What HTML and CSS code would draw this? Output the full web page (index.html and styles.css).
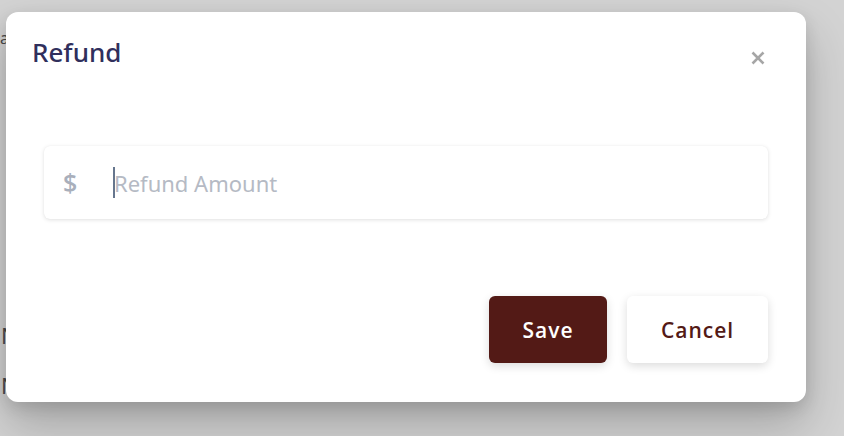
FILE: index.html
```html
<!DOCTYPE html>
<html lang="en">
<head>
<meta charset="utf-8">
<title>Refund</title>
<link rel="stylesheet" href="styles.css">
</head>
<body>
<div class="page">
  <p class="bg-line bg-top">a</p>
  <p class="bg-line bg-n1">N</p>
  <p class="bg-line bg-n2">N</p>
</div>
<div class="modal" role="dialog" aria-label="Refund">
  <div class="modal-header">
    <h2 class="modal-title">Refund</h2>
    <button class="close" aria-label="Close">
      <svg width="14" height="14" viewBox="0 0 14 14"><path d="M1.5 1.5 L12.5 12.5 M12.5 1.5 L1.5 12.5" stroke="#a6a6a6" stroke-width="2.6" stroke-linecap="butt" fill="none"/></svg>
    </button>
  </div>
  <div class="modal-body">
    <div class="field">
      <span class="currency">$</span>
      <span class="caret"></span>
      <span class="placeholder">Refund Amount</span>
    </div>
  </div>
  <div class="modal-footer">
    <button class="btn btn-primary">Save</button>
    <button class="btn btn-secondary">Cancel</button>
  </div>
</div>
</body>
</html>
```
FILE: styles.css
```css
html, body {
  margin: 0;
  padding: 0;
}
body {
  width: 844px;
  height: 436px;
  overflow: hidden;
  background: #d3d3d3;
  font-family: "Noto Sans", "Open Sans", sans-serif;
  position: relative;
}
.page {
  display: flex;
  flex-direction: column;
  padding: 0;
}
.bg-line {
  margin: 0;
  color: #4a4a4a;
  line-height: 1;
  position: absolute;
  left: 1px;
}
.bg-top { top: 30px; font-size: 16px; left: 0; }
.bg-n1 { top: 324px; font-size: 22px; }
.bg-n2 { top: 374px; font-size: 22px; }

.modal {
  position: absolute;
  left: 6px;
  top: 12px;
  width: 800px;
  height: 390px;
  background: #fff;
  border-radius: 12px;
  box-shadow: 0 24px 48px rgba(0, 0, 0, 0.22), 0 6px 16px rgba(0, 0, 0, 0.12);
  display: flex;
  flex-direction: column;
  box-sizing: border-box;
}
.modal-header {
  display: flex;
  justify-content: space-between;
  align-items: flex-start;
  padding: 22px 41px 0 26px;
}
.modal-title {
  margin: 0;
  font-size: 26px;
  font-weight: 500;
  color: #302f5c;
  line-height: 36px;
}
.close {
  border: 0;
  background: none;
  padding: 0;
  margin-top: 17px;
  width: 14px;
  height: 14px;
  display: flex;
}
.modal-body {
  padding: 0 38px;
  margin-top: 76px;
}
.field {
  height: 73px;
  border-radius: 6px;
  background: #fff;
  box-shadow: 0 1px 4px rgba(0, 0, 0, 0.12), 0 0 1px rgba(0, 0, 0, 0.06);
  display: flex;
  align-items: center;
  padding-left: 19px;
}
.currency {
  font-family: "Open Sans", "Noto Sans", sans-serif;
  font-size: 25px;
  font-weight: 600;
  color: #a9afbb;
  width: 50px;
  line-height: 1;
}
.caret {
  width: 2px;
  height: 31px;
  background: #66768e;
  margin-right: -1px;
}
.placeholder {
  font-size: 22px;
  color: #b5bac4;
}
.modal-footer {
  display: flex;
  justify-content: flex-end;
  gap: 20px;
  padding: 0 38px;
  margin-top: 77px;
}
.btn {
  height: 67px;
  border: 0;
  border-radius: 6px;
  font-family: "Open Sans", "Noto Sans", sans-serif;
  font-size: 21px;
  font-weight: 600;
  letter-spacing: 1px;
  box-shadow: 0 3px 10px rgba(0, 0, 0, 0.14);
}
.btn-primary {
  width: 118px;
  background: #531a16;
  color: #fff;
}
.btn-secondary {
  width: 141px;
  background: #fff;
  color: #531a16;
}
```
